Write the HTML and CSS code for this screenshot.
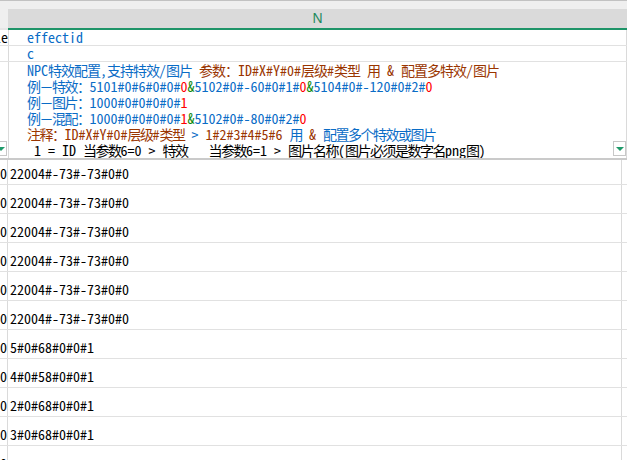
FILE: index.html
```html
<!DOCTYPE html>
<html>
<head>
    <link rel="stylesheet" href="styles.css">
</head>
<body>
    <div class="sheet">
        <div class="topbar"></div>
        <div class="colhead">
            <div class="hc hc-m"></div>
            <div class="hc hc-n">N</div>
        </div>
        <div class="frozen">
            <div class="row r1">
                <div class="c0">le</div>
                <div class="cn hd"><span class="b">effectid</span></div>
            </div>
            <div class="row r2">
                <div class="c0"></div>
                <div class="cn hd"><span class="b">c</span></div>
            </div>
            <div class="row r3">
                <div class="c0"><span class="filter filter-left"></span></div>
                <div class="cn hd lines">
                    <div class="ln ln-wide"><span class="b">NPC<span class="h">特效配置</span>,<span class="h">支持特效</span>/<span class="h">图片</span></span> <span class="br"><span class="h">参数：</span>ID#X#Y#0#<span class="h">层级</span>#<span class="h">类型</span> <span class="h">用</span> &amp; <span class="h">配置多特效</span>/<span class="h">图片</span></span></div>
                    <div class="ln"><span class="b"><span class="h">例－特效：</span>5101#0#6#0#0#</span><span class="r">0</span><span class="g">&amp;</span><span class="b">5102#0#-60#0#1#</span><span class="r">0</span><span class="g">&amp;</span><span class="b">5104#0#-120#0#2#</span><span class="r">0</span></div>
                    <div class="ln"><span class="b"><span class="h">例－图片：</span>1000#0#0#0#0#</span><span class="r">1</span></div>
                    <div class="ln"><span class="b"><span class="h">例－混配：</span>1000#0#0#0#0#</span><span class="r">1</span><span class="g">&amp;</span><span class="b">5102#0#-80#0#2#</span><span class="r">0</span></div>
                    <div class="ln"><span class="br"><span class="h">注释：</span>ID#X#Y#0#<span class="h">层级</span>#<span class="h">类型</span></span><span class="b"> &gt; </span><span class="br">1#2#3#4#5#6</span><span class="b"> <span class="h">用</span> </span><span class="br">&amp;</span><span class="b"> <span class="h">配置多个特效或图片</span></span></div>
                    <div class="ln"> 1 = ID <span class="h">当参数</span>6=0 &gt; <span class="h">特效</span>   <span class="h">当参数</span>6=1 &gt; <span class="h">图片名称</span>(<span class="h">图片必须是数字名</span>png<span class="h">图</span>)</div>
                    <span class="filter filter-right"></span>
                </div>
            </div>
        </div>
        <div class="data">
            <div class="row dr first"><div class="c0">0</div><div class="cn">22004#-73#-73#0#0</div></div>
            <div class="row dr"><div class="c0">0</div><div class="cn">22004#-73#-73#0#0</div></div>
            <div class="row dr"><div class="c0">0</div><div class="cn">22004#-73#-73#0#0</div></div>
            <div class="row dr"><div class="c0">0</div><div class="cn">22004#-73#-73#0#0</div></div>
            <div class="row dr"><div class="c0">0</div><div class="cn">22004#-73#-73#0#0</div></div>
            <div class="row dr"><div class="c0">0</div><div class="cn">22004#-73#-73#0#0</div></div>
            <div class="row dr"><div class="c0">0</div><div class="cn">5#0#68#0#0#1</div></div>
            <div class="row dr"><div class="c0">0</div><div class="cn">4#0#58#0#0#1</div></div>
            <div class="row dr"><div class="c0">0</div><div class="cn">2#0#68#0#0#1</div></div>
            <div class="row dr"><div class="c0">0</div><div class="cn">3#0#68#0#0#1</div></div>
            <div class="row dr"><div class="c0">0</div><div class="cn"></div></div>
        </div>
    </div>
</body>
</html>
```

FILE: styles.css
```css
body {
    margin: 0;
    padding: 0;
    background: #ffffff;
    overflow: hidden;
}
.sheet {
    width: 627px;
    height: 460px;
    overflow: hidden;
    font-family: "Noto Sans Mono CJK SC", "Liberation Mono", "Noto Sans CJK SC", monospace;
    font-size: 14px;
    color: #000000;
}
.topbar {
    height: 8px;
    background: #efefef;
    border-top: 1px solid #c2c2c2;
}
.colhead {
    display: flex;
    height: 21px;
}
.hc {
    height: 19px;
}
.hc-m {
    width: 8px;
    background: #efefef;
    border-bottom: 2px solid #e6e6e6;
}
.hc-n {
    flex: 1;
    background: #dadada;
    border-bottom: 2px solid #1e9468;
    color: #1e8a5e;
    font-family: "Liberation Sans", Arial, sans-serif;
    font-size: 14px;
    line-height: 19px;
    text-align: center;
}
.row {
    display: flex;
    border-bottom: 1px solid #e1e1e1;
}
.c0 {
    width: 8px;
    flex-shrink: 0;
    border-right: 1px solid #dadada;
    overflow: hidden;
    direction: rtl;
    text-align: right;
    white-space: nowrap;
    position: relative;
}
.cn {
    width: 614px;
    padding-left: 2px;
    border-right: 1px solid #dadada;
    white-space: nowrap;
    overflow: hidden;
    position: relative;
}
.hd {
    padding-left: 18px;
}
.r1, .r2 {
    height: 15px;
    line-height: 15px;
}
.r3 {
    height: 96px;
    border-bottom: 2px solid #cacaca;
}
.r3 .c0 {
    overflow: visible;
}
.ln {
    height: 16px;
    line-height: 16px;
    white-space: pre;
}
/* CJK runs sit a little tighter than the full 1em cell */
.h { letter-spacing: -1.5px; }
.ln-wide .h { letter-spacing: -1px; }
.b { color: #0a6cc6; }
.br { color: #9a3500; }
.r { color: #ff0000; }
.g { color: #108a10; }
.filter {
    position: absolute;
    top: 79px;
    width: 13px;
    height: 15px;
    background: #ffffff;
    border: 1px solid #c8c8c8;
    box-sizing: border-box;
}
.filter::after {
    content: '';
    position: absolute;
    left: 2px;
    top: 5px;
    border-left: 4px solid transparent;
    border-right: 4px solid transparent;
    border-top: 4px solid #1e9a6a;
}
.filter-left {
    left: -6px;
}
.filter-right {
    right: 0;
}
.dr {
    height: 28px;
}
.dr.first {
    height: 24px;
}
.dr .c0, .dr .cn {
    height: 100%;
    line-height: 16px;
    display: flex;
    align-items: flex-end;
    padding-bottom: 3px;
    box-sizing: border-box;
}
.dr .c0 {
    justify-content: flex-end;
    padding-right: 1px;
}
```
